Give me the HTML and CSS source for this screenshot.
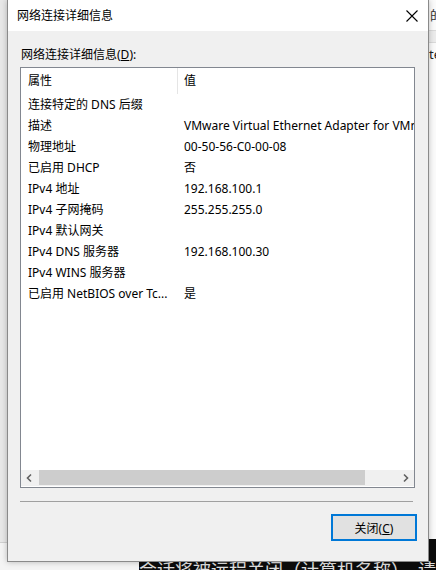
FILE: index.html
```html
<!DOCTYPE html>
<html>

<head>
  <title>网络连接详细信息</title>
  <link rel="stylesheet" href="styles.css">
</head>

<body>
  <div class="desk">
    <div class="backwin">
      <div class="back-title">的</div>
      <div class="back-bar"></div>
      <div class="back-body">te</div>
    </div>
    <div class="floor"></div>
    <div class="console"><span>会话将被远程关闭（计算机名称）。请保存</span></div>

    <div class="dialog">
      <div class="titlebar">
        <span class="title">网络连接详细信息</span>
        <svg class="close" width="12" height="12" viewBox="0 0 12 12">
          <path d="M0.5 0.5 L11.5 11.5 M11.5 0.5 L0.5 11.5" stroke="#000" stroke-width="1.1" fill="none" />
        </svg>
      </div>

      <div class="content">
        <div class="label">网络连接详细信息(<u>D</u>):</div>

        <div class="listbox">
          <div class="rows">
            <div class="row head">
              <div class="c1">属性</div>
              <div class="c2">值</div>
            </div>
            <div class="row"><div class="c1">连接特定的 DNS 后缀</div><div class="c2"></div></div>
            <div class="row"><div class="c1">描述</div><div class="c2">VMware Virtual Ethernet Adapter for VMnet8</div></div>
            <div class="row"><div class="c1">物理地址</div><div class="c2">00-50-56-C0-00-08</div></div>
            <div class="row"><div class="c1">已启用 DHCP</div><div class="c2">否</div></div>
            <div class="row"><div class="c1">IPv4 地址</div><div class="c2">192.168.100.1</div></div>
            <div class="row"><div class="c1">IPv4 子网掩码</div><div class="c2">255.255.255.0</div></div>
            <div class="row"><div class="c1">IPv4 默认网关</div><div class="c2"></div></div>
            <div class="row"><div class="c1">IPv4 DNS 服务器</div><div class="c2">192.168.100.30</div></div>
            <div class="row"><div class="c1">IPv4 WINS 服务器</div><div class="c2"></div></div>
            <div class="row"><div class="c1">已启用 NetBIOS over Tc...</div><div class="c2">是</div></div>
          </div>

          <div class="hscroll">
            <svg class="arrow" width="17" height="16" viewBox="0 0 17 16">
              <path d="M10 4.5 L6.5 8 L10 11.5" stroke="#606060" stroke-width="1.6" fill="none" />
            </svg>
            <div class="track"><div class="thumb"></div></div>
            <svg class="arrow" width="17" height="16" viewBox="0 0 17 16">
              <path d="M7 4.5 L10.5 8 L7 11.5" stroke="#606060" stroke-width="1.6" fill="none" />
            </svg>
          </div>
        </div>

        <div class="sep"></div>

        <div class="buttons">
          <button class="btn">关闭(<u>C</u>)</button>
        </div>
      </div>
    </div>
  </div>
</body>

</html>
```

FILE: styles.css
```css
body {
  margin: 0;
  background: #f2f2f2;
  font-family: "Noto Sans", "Noto Sans CJK SC", sans-serif;
  font-size: 12px;
  color: #000;
}

.desk {
  position: relative;
  width: 436px;
  height: 570px;
  overflow: hidden;
  background: #e8e8e8;
}

/* windows behind the dialog */
.backwin {
  position: absolute;
  left: 400px;
  top: 0;
  width: 60px;
  height: 539px;
  background: #fbfbfb;
}

.back-title {
  height: 30px;
  line-height: 30px;
  padding-left: 30px;
  font-size: 13px;
  color: #333;
}

.back-bar {
  height: 11px;
  background: #ececec;
  border-top: 1px solid #dadada;
  border-bottom: 1px solid #dadada;
}

.back-body {
  padding: 2px 0 0 29px;
  font-size: 13px;
  color: #222;
}

.floor {
  position: absolute;
  left: 0;
  top: 542px;
  width: 139px;
  height: 28px;
  background: #f4f4f4;
  border-top: 1px solid #d0d0d0;
}

.console {
  position: absolute;
  left: 139px;
  top: 539px;
  width: 320px;
  height: 40px;
  background: #0c0c0c;
  overflow: hidden;
}

.console span {
  display: block;
  margin-top: 17px;
  color: #e0e0e0;
  font-size: 18px;
  white-space: nowrap;
}

.dialog {
  position: absolute;
  left: 7px;
  top: 0;
  width: 420px;
  height: 561px;
  background: #f0f0f0;
  border: 1px solid #8a8a8a;
  border-top: none;
  box-shadow: 0 0 6px rgba(0, 0, 0, 0.25);
  display: flex;
  flex-direction: column;
}

.titlebar {
  height: 31px;
  background: #fff;
  display: flex;
  align-items: center;
  justify-content: space-between;
  padding: 0 10px 0 9px;
  flex-shrink: 0;
}

.title {
  font-size: 12px;
  margin-top: -1px;
}

.content {
  padding: 16px 13px 0 12px;
  display: flex;
  flex-direction: column;
}

.label {
  line-height: 16px;
  height: 16px;
  margin-left: 1px;
}

.listbox {
  margin-top: 4px;
  height: 419px;
  background: #fff;
  border: 1px solid #828790;
  display: flex;
  flex-direction: column;
  overflow: hidden;
}

.rows {
  flex: 1;
  overflow: hidden;
  padding-top: 2px;
}

.row {
  display: flex;
  height: 21px;
  line-height: 21px;
  white-space: nowrap;
}

.row.head {
  height: 24px;
  line-height: 22px;
}

.c1 {
  width: 149px;
  padding-left: 7px;
  flex-shrink: 0;
  overflow: hidden;
}

.c2 {
  padding-left: 7px;
}

.head .c2 {
  border-left: 1px solid #e5e5e5;
  padding-left: 6px;
  margin-top: -2px;
  padding-top: 2px;
}

.hscroll {
  height: 16px;
  margin: 0 0 1px 0;
  background: #f0f0f0;
  display: flex;
  align-items: stretch;
  flex-shrink: 0;
}

.arrow {
  flex-shrink: 0;
}

.track {
  flex: 1;
  padding: 0 0 0 1px;
  display: flex;
}

.thumb {
  width: 326px;
  background: #cdcdcd;
  height: 15px;
}

.sep {
  margin-top: 13px;
  height: 1px;
  background: #a0a0a0;
  width: 393px;
}

.buttons {
  display: flex;
  justify-content: flex-end;
  margin-top: 12px;
}

.btn {
  width: 86px;
  height: 27px;
  margin-right: -2px;
  background: #e1e1e1;
  border: 2px solid #0078d7;
  font-family: "Noto Sans", "Noto Sans CJK SC", sans-serif;
  font-size: 12px;
  color: #000;
  padding: 0;
}
```
